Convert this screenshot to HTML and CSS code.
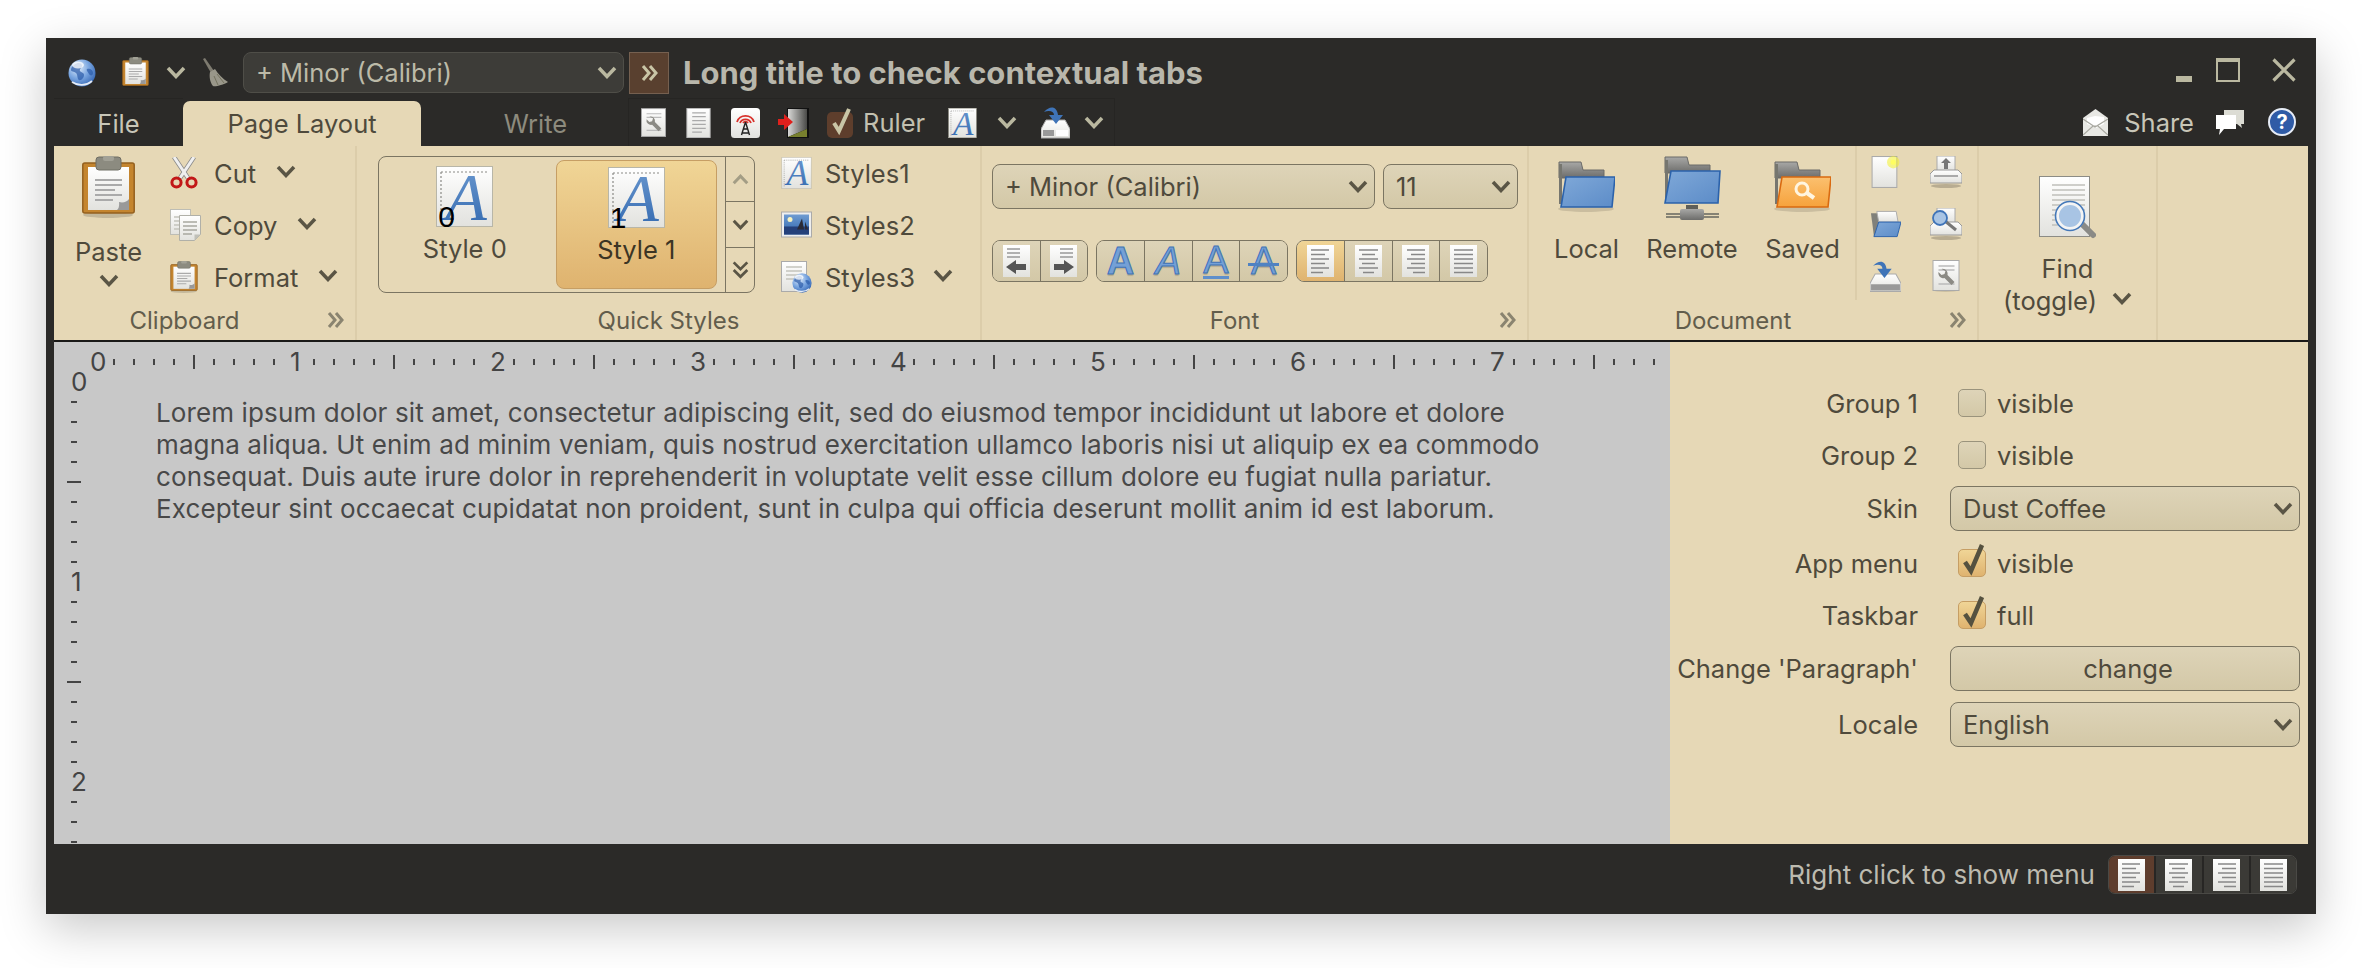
FILE: index.html
```html
<!DOCTYPE html>
<html>
<head lang="en">
    <meta charset="UTF-8">
    <title>Long title to check contextual tabs</title>
    <link rel="stylesheet" href="styles.css">
</head>
<body>
<svg class="defs" width="0" height="0">
    <defs>
        <linearGradient id="pg" x1="0" y1="0" x2="0" y2="1"><stop offset="0" stop-color="#fff"/><stop offset="1" stop-color="#e2e2de"/></linearGradient>
        <linearGradient id="blu" x1="0" y1="0" x2="0" y2="1"><stop offset="0" stop-color="#6f9cd2"/><stop offset="1" stop-color="#2f66ad"/></linearGradient>
        <linearGradient id="fold" x1="0" y1="0" x2="1" y2="1"><stop offset="0" stop-color="#7fa8d8"/><stop offset="1" stop-color="#5c8cc8"/></linearGradient>
        <linearGradient id="gry" x1="0" y1="0" x2="0" y2="1"><stop offset="0" stop-color="#a8a8a6"/><stop offset="1" stop-color="#6c6c6a"/></linearGradient>
        <linearGradient id="org" x1="0" y1="0" x2="0" y2="1"><stop offset="0" stop-color="#fbc06f"/><stop offset="1" stop-color="#f6a23c"/></linearGradient>
        <linearGradient id="door" x1="0" y1="0" x2="1" y2="0"><stop offset="0" stop-color="#d8d8d6"/><stop offset="1" stop-color="#4a4a48"/></linearGradient>
        <radialGradient id="glb" cx=".35" cy=".3" r=".8"><stop offset="0" stop-color="#e4eefa"/><stop offset=".5" stop-color="#7aa6e0"/><stop offset="1" stop-color="#2c5fb0"/></radialGradient>

        <symbol id="chev" viewBox="0 0 20 13"><path d="M2 2l8 8.5L18 2" fill="none" stroke="currentColor" stroke-width="3.5"/></symbol>
        <symbol id="more" viewBox="0 0 17 16"><path d="M2 1l6 7-6 7M9 1l6 7-6 7" fill="none" stroke="currentColor" stroke-width="3"/></symbol>

        <symbol id="globe" viewBox="0 0 28 28">
            <circle cx="14" cy="14" r="13.5" fill="url(#glb)"/>
            <path d="M6 6c4-3 7-2 8 0s-3 4-2 6 4 1 4 4-3 6-5 5-1-5-3-7-5-1-5-3 1-4 3-5zM19 10c3-1 6 1 6 4s-3 3-4 1-3-4-2-5z" fill="#2a5aa8" opacity=".7"/>
            <ellipse cx="10" cy="6" rx="6" ry="3.5" fill="#fff" opacity=".75"/>
            <path d="M4 23c6 4 14 4 20-1" fill="none" stroke="#fff" stroke-width="1.8" opacity=".85"/>
        </symbol>
        <symbol id="clip" viewBox="0 0 53 62">
            <ellipse cx="26" cy="59" rx="25" ry="3" fill="#000" opacity=".15"/>
            <rect x=".8" y="7" width="51.4" height="50" rx="2" fill="#c4852f" stroke="#94601f" stroke-width="1.5"/>
            <rect x="6" y="11" width="41" height="43" fill="url(#pg)"/>
            <path d="M13 24h27M13 29h27M13 34h20M13 39h27M13 44h18" stroke="#aaa" stroke-width="2"/>
            <path d="M47 54H35c3-2 2-8 2-8 4 1 8 0 10-3z" fill="#999"/>
            <rect x="14" y="1" width="25" height="13" rx="3" fill="#8c8b80" stroke="#6f6e64"/>
            <rect x="21" y="0" width="11" height="5" rx="2" fill="#a2a196"/>
        </symbol>
        <symbol id="broom" viewBox="0 0 26 29">
            <path d="M1 1l2-1 9 13-3 2z" fill="#7e7b70"/>
            <path d="M8 14l5-3c3 5 8 10 13 13-5 3-13 5-15 4-3-3-4-10-3-14z" fill="#99978a"/>
            <path d="M12 18l4 9M15 16l7 9" stroke="#74725f" stroke-width="1"/>
        </symbol>
        <symbol id="cut" viewBox="0 0 28 32">
            <path d="M4 0l14 21M24 0L10 21" stroke="#8c8c8c" stroke-width="4.6"/>
            <path d="M4 0l14 21M24 0L10 21" stroke="#efefef" stroke-width="3"/>
            <ellipse cx="6.5" cy="25.5" rx="4.6" ry="4.4" fill="none" stroke="#c21818" stroke-width="3"/>
            <ellipse cx="21.5" cy="25.5" rx="4.6" ry="4.4" fill="none" stroke="#c21818" stroke-width="3"/>
        </symbol>
        <symbol id="copy" viewBox="0 0 31 32">
            <rect x=".5" y=".5" width="20" height="25" fill="url(#pg)" stroke="#bdbdb5"/>
            <path d="M4 8h13M4 12h13M4 16h13M4 20h13" stroke="#c4c4bc" stroke-width="1.3"/>
            <path d="M9.5 6.5h21v19l-6 6h-15z" fill="url(#pg)" stroke="#b0b0a8"/>
            <path d="M13 13h14M13 17h14M13 21h14M13 25h9" stroke="#a8a8a0" stroke-width="1.3"/>
            <path d="M24.5 31.5v-6h6z" fill="#c0c0b8"/>
        </symbol>
        <symbol id="apage" viewBox="0 0 57 61">
            <rect x=".5" y=".5" width="56" height="60" fill="url(#pg)" stroke="#b8b6a8"/>
            <path d="M5 6h48M5 6v50" stroke="#8a8a86" stroke-width="1.2" stroke-dasharray="2 2"/>
            <text class="apage-a" x="30" y="54" fill="url(#blu)">A</text>
        </symbol>
        <symbol id="image" viewBox="0 0 31 27">
            <rect x=".5" y=".5" width="30" height="25" fill="#eee" stroke="#aaa"/>
            <rect x="3" y="3" width="25" height="20" fill="url(#blu)"/>
            <rect x="3" y="15" width="25" height="8" fill="#24407a"/>
            <circle cx="9" cy="8" r="2.5" fill="#f6f2c0"/>
            <path d="M21 7l2 11h-7zM24 10l3 8h-3z" fill="#2b2b35"/>
        </symbol>
        <symbol id="docglobe" viewBox="0 0 31 32">
            <rect x=".5" y=".5" width="25" height="30" fill="url(#pg)" stroke="#aaa"/>
            <path d="M5 6h16M5 10h16M5 14h16M5 18h8" stroke="#c4c4bc" stroke-width="1.3"/>
            <use href="#globe" x="11" y="12" width="20" height="20"/>
        </symbol>
        <symbol id="docwrench" viewBox="0 0 27 32">
            <ellipse cx="13" cy="30.5" rx="12" ry="1.5" fill="#000" opacity=".12"/>
            <rect x=".5" y=".5" width="26" height="30" fill="url(#pg)" stroke="#aaa"/>
            <path d="M6 6h16M6 10h16M6 24h16" stroke="#bbb" stroke-width="1.3"/>
            <path d="M9 9a5 5 0 0 1 6 6l7 7-3 3-7-7a5 5 0 0 1-6-6l3 3 3-1 1-3z" fill="#8b8a84"/>
        </symbol>
        <symbol id="doc" viewBox="0 0 25 31">
            <rect x=".5" y=".5" width="24" height="30" fill="url(#pg)" stroke="#bbb"/>
            <path d="M6 5h14M6 9h14M6 13h14M6 17h14M6 21h14M6 25h10" stroke="#aaa" stroke-width="1.3"/>
        </symbol>
        <symbol id="antenna" viewBox="0 0 29 30">
            <rect width="29" height="30" rx="3.5" fill="url(#pg)"/>
            <path d="M6 14a9 9 0 0 1 17 0M9 15a6 6 0 0 1 11 0M12 15a3 3 0 0 1 5 0" fill="none" stroke="#d8322c" stroke-width="1.8"/>
            <path d="M14.5 14l-4 13M14.5 14l4 13M12.5 21h4M11 25h7" stroke="#222" stroke-width="1.4" fill="none"/>
        </symbol>
        <symbol id="exit" viewBox="0 0 31 30">
            <path d="M9 0h22v30H9z" fill="#111"/>
            <path d="M10 1h19v20L10 29z" fill="url(#door)"/>
            <path d="M29 21v8H10z" fill="#78802e"/>
            <path d="M0 11h6V6l9 8-9 8v-5H0z" fill="#e0201c"/>
        </symbol>
        <symbol id="save" viewBox="0 0 29 33">
            <path d="M5 14h19l5 9v9H0v-9z" fill="url(#pg)" stroke="#aaa"/>
            <rect x="2" y="24" width="11" height="6" fill="#999"/>
            <rect x="15" y="24" width="12" height="6" fill="#fff"/>
            <path d="M3 6c6-7 13-6 14 3h5l-7 9-7-9h5c0-4-5-5-10-3z" fill="#3f74b8"/>
        </symbol>
        <symbol id="local" viewBox="0 0 57 52">
            <ellipse cx="28" cy="49" rx="28" ry="3" fill="#000" opacity=".12"/>
            <path d="M1 2h22l2 8h21v8H1z" fill="url(#gry)" stroke="#6a6a68"/>
            <path d="M1 4v40h3V4z" fill="#76766f"/>
            <path d="M8 17h49l-3 30H3z" fill="url(#fold)" stroke="#2b62ab" stroke-width="1.6"/>
        </symbol>
        <symbol id="remote" viewBox="0 0 57 64">
            <path d="M1 1h22l2 8h21v8H1z" fill="url(#gry)" stroke="#6a6a68"/>
            <path d="M1 4v40h3V4z" fill="#76766f"/>
            <path d="M7 15h49l-2 32H1z" fill="url(#fold)" stroke="#2b62ab" stroke-width="1.6"/>
            <path d="M2 58h53M2 61h53" stroke="#66665f" stroke-width="1.5"/>
            <rect x="22" y="49" width="12" height="4" fill="#5f5f59"/>
            <rect x="16" y="53" width="24" height="11" rx="2" fill="url(#gry)"/>
        </symbol>
        <symbol id="saved" viewBox="0 0 57 52">
            <ellipse cx="28" cy="49" rx="28" ry="3" fill="#000" opacity=".12"/>
            <path d="M1 2h22l2 8h21v8H1z" fill="url(#gry)" stroke="#6a6a68"/>
            <path d="M1 4v40h3V4z" fill="#76766f"/>
            <path d="M8 17h49l-3 30H3z" fill="url(#org)" stroke="#d96a10" stroke-width="1.6"/>
            <circle cx="28" cy="29" r="6" fill="none" stroke="#fff5e0" stroke-width="3"/>
            <path d="M33 33l7 5" stroke="#fff5e0" stroke-width="4"/>
        </symbol>
        <symbol id="newdoc" viewBox="0 0 27 31">
            <rect x=".5" y=".5" width="24" height="30" fill="url(#pg)" stroke="#aaa"/>
            <circle cx="21" cy="6" r="6" fill="#f3f02a" opacity=".55"/>
            <circle cx="21" cy="6" r="2.5" fill="#fffe60"/>
        </symbol>
        <symbol id="print" viewBox="0 0 32 32">
            <ellipse cx="16" cy="30" rx="15" ry="2" fill="#000" opacity=".2"/>
            <rect x="7" y="0" width="18" height="15" fill="url(#pg)" stroke="#aaa"/>
            <path d="M16 2l5 5h-3v6h-4V7h-3z" fill="#777"/>
            <path d="M4 14h24l4 4v9H0v-9z" fill="url(#pg)" stroke="#999"/>
            <rect x="4" y="19" width="24" height="2" fill="#aaa"/>
        </symbol>
        <symbol id="open" viewBox="0 0 32 30">
            <path d="M1 4h8l2 3v20H4z" fill="#80807a"/>
            <path d="M7 2h20l2 11H9z" fill="url(#pg)" stroke="#aaa"/>
            <path d="M9 13h23l-4 15H4z" fill="url(#fold)" stroke="#2b62ab"/>
        </symbol>
        <symbol id="preview" viewBox="0 0 32 32">
            <ellipse cx="16" cy="30" rx="15" ry="2" fill="#000" opacity=".2"/>
            <rect x="7" y="0" width="18" height="15" fill="url(#pg)" stroke="#aaa"/>
            <path d="M4 14h24l4 4v9H0v-9z" fill="url(#pg)" stroke="#999"/>
            <path d="M15 13l11 9" stroke="#777" stroke-width="3"/>
            <circle cx="10" cy="10" r="7" fill="#a8c4e4" stroke="#3f74b8" stroke-width="1.8"/>
        </symbol>
        <symbol id="disk" viewBox="0 0 30 30">
            <path d="M5 13h20l5 9v8H0v-8z" fill="url(#pg)" stroke="#aaa"/>
            <rect x="1" y="23" width="28" height="6" fill="#999"/>
            <path d="M3 5c6-6 12-5 13 3h5l-7 9-7-9h5c0-4-4-5-9-3z" fill="#3f74b8"/>
        </symbol>
        <symbol id="find" viewBox="0 0 57 63">
            <rect x=".5" y=".5" width="50" height="60" fill="url(#pg)" stroke="#8c8c86"/>
            <path d="M13 9h33M13 14h33M13 19h33M13 24h33M13 29h33M13 34h33M13 39h33M13 44h33M13 49h33" stroke="#c0c0ba" stroke-width="1.5"/>
            <path d="M42 47l12 12" stroke="#8a8a86" stroke-width="6" stroke-linecap="round"/>
            <circle cx="31" cy="40" r="13" fill="#a8c4e4" stroke="#f4f4f4" stroke-width="4"/>
            <circle cx="31" cy="40" r="14.5" fill="none" stroke="#4478b8" stroke-width="1.6"/>
        </symbol>
        <symbol id="chat" viewBox="0 0 28 27">
            <path d="M8 1h20v14h-3l1 4-5-4H8z" fill="#dcdcd4"/>
            <path d="M0 6h20v14H8l-5 6 1-6H0z" fill="#fff"/>
        </symbol>
        <symbol id="mail" viewBox="0 0 25 27">
            <path d="M12.5 0L25 9v18H0V9z" fill="#e8e8e4"/>
            <path d="M4 9l8-2 9 1v7l-8 4-9-4z" fill="#fff"/>
            <path d="M0 26l10-9h5l10 9M0 10l12 8 13-8" fill="none" stroke="#a8a8a0" stroke-width="1.2"/>
        </symbol>
        <symbol id="help" viewBox="0 0 28 29">
            <circle cx="14" cy="14" r="13" fill="#2f5ba6" stroke="#e6ecf6" stroke-width="2"/>
        </symbol>
        <symbol id="ind-l" viewBox="0 0 27 32">
            <rect width="27" height="32" fill="url(#pg)"/>
            <path d="M4 4h13M4 8h13M4 12h13" stroke="#999" stroke-width="1.5"/>
            <path d="M3 22l10-7v4h10v6H13v4z" fill="#555"/>
        </symbol>
        <symbol id="ind-r" viewBox="0 0 27 32">
            <rect width="27" height="32" fill="url(#pg)"/>
            <path d="M10 4h13M10 8h13M10 12h13" stroke="#999" stroke-width="1.5"/>
            <path d="M24 22l-10-7v4H4v6h10v4z" fill="#555"/>
        </symbol>
        <symbol id="al-l" viewBox="0 0 27 32">
            <rect width="27" height="32" fill="url(#pg)"/>
            <path d="M4 5h18M4 9.500h14M4 14h18M4 18.500h14M4 23h18M4 27.500h12" stroke="#888" stroke-width="1.6"/>
        </symbol>
        <symbol id="al-c" viewBox="0 0 27 32">
            <rect width="27" height="32" fill="url(#pg)"/>
            <path d="M4 5h19M7 9.500h13M4 14h19M7 18.500h13M4 23h19M8 27.500h11" stroke="#888" stroke-width="1.6"/>
        </symbol>
        <symbol id="al-r" viewBox="0 0 27 32">
            <rect width="27" height="32" fill="url(#pg)"/>
            <path d="M5 5h18M9 9.500h14M5 14h18M9 18.500h14M5 23h18M11 27.500h12" stroke="#888" stroke-width="1.6"/>
        </symbol>
        <symbol id="al-j" viewBox="0 0 27 32">
            <rect width="27" height="32" fill="url(#pg)"/>
            <path d="M4 5h19M4 9.500h19M4 14h19M4 18.500h19M4 23h19M4 27.500h19" stroke="#888" stroke-width="1.6"/>
        </symbol>
    </defs>
</svg>

<div class="window">
    <div class="titlebar">
        <svg class="ic-globe"><use href="#globe"/></svg>
        <svg class="ic-tb-clip"><use href="#clip"/></svg>
        <svg class="chev tb-chev"><use href="#chev"/></svg>
        <svg class="ic-broom"><use href="#broom"/></svg>
        <div class="combo combo-dark">
            <span>+ Minor (Calibri)</span>
            <svg class="chev"><use href="#chev"/></svg>
        </div>
        <div class="more-btn"><svg class="more"><use href="#more"/></svg></div>
        <div class="title">Long title to check contextual tabs</div>
        <div class="win-ctrls">
            <span class="win-min"></span>
            <span class="win-max"></span>
            <svg class="win-close" viewBox="0 0 24 24"><path d="M1.500 1.500l21 21M22.500 1.500l-21 21" stroke="#bab8a0" stroke-width="3.2"/></svg>
        </div>
    </div>

    <div class="tabrow">
        <div class="tab tab-file">File</div>
        <div class="tab tab-active">Page Layout</div>
        <div class="tab tab-write">Write</div>
        <div class="qat">
            <svg class="ic-qat"><use href="#docwrench"/></svg>
            <svg class="ic-qat"><use href="#doc"/></svg>
            <svg class="ic-qat ic-wide"><use href="#antenna"/></svg>
            <svg class="ic-qat ic-wider"><use href="#exit"/></svg>
            <span class="qat-check"><svg viewBox="0 0 26 30"><rect y="4" width="26" height="26" rx="5" fill="#5e3e2c"/><path d="M7 15l5 8L22 1" fill="none" stroke="#c9c5a6" stroke-width="4"/></svg></span>
            <span class="qat-label">Ruler</span>
            <svg class="ic-qat ic-wide ic-apage"><use href="#apage"/></svg>
            <svg class="chev qat-chev"><use href="#chev"/></svg>
            <svg class="ic-qat ic-wide ic-save"><use href="#save"/></svg>
            <svg class="chev qat-chev qat-chev-last"><use href="#chev"/></svg>
        </div>
        <div class="share">
            <svg class="ic-mail"><use href="#mail"/></svg>
            <span class="share-label">Share</span>
            <svg class="ic-chat"><use href="#chat"/></svg>
            <span class="help"><svg class="ic-help"><use href="#help"/></svg><b>?</b></span>
        </div>
    </div>

    <div class="ribbon">
        <section class="group group-clip">
            <div class="group-body">
                <div class="paste">
                    <svg class="ic-paste"><use href="#clip"/></svg>
                    <span>Paste</span>
                    <svg class="chev"><use href="#chev"/></svg>
                </div>
                <div class="stack">
                    <div class="row"><span class="row-ic"><svg class="ic-28"><use href="#cut"/></svg></span><span>Cut</span><svg class="chev"><use href="#chev"/></svg></div>
                    <div class="row"><span class="row-ic"><svg class="ic-31"><use href="#copy"/></svg></span><span>Copy</span><svg class="chev"><use href="#chev"/></svg></div>
                    <div class="row"><span class="row-ic"><svg class="ic-28"><use href="#clip"/></svg></span><span>Format</span><svg class="chev"><use href="#chev"/></svg></div>
                </div>
            </div>
            <div class="group-foot"><span>Clipboard</span><svg class="more"><use href="#more"/></svg></div>
        </section>

        <section class="group group-quick">
            <div class="group-body">
                <div class="gallery">
                    <div class="style-cell">
                        <div class="style-ic"><svg class="ic-style"><use href="#apage"/></svg><i>0</i></div>
                        <span>Style 0</span>
                    </div>
                    <div class="style-cell style-on">
                        <div class="style-ic"><svg class="ic-style"><use href="#apage"/></svg><i>1</i></div>
                        <span>Style 1</span>
                    </div>
                    <div class="scroller">
                        <div class="dim"><svg class="chev chev-up"><use href="#chev"/></svg></div>
                        <div><svg class="chev"><use href="#chev"/></svg></div>
                        <div><svg class="dbl" viewBox="0 0 20 22"><path d="M2 2l8 8 8-8M2 11l8 8 8-8" fill="none" stroke="currentColor" stroke-width="3.2"/></svg></div>
                    </div>
                </div>
                <div class="stack stack-styles">
                    <div class="row"><span class="row-ic"><svg class="ic-31"><use href="#apage"/></svg></span><span>Styles1</span></div>
                    <div class="row"><span class="row-ic"><svg class="ic-31"><use href="#image"/></svg></span><span>Styles2</span></div>
                    <div class="row"><span class="row-ic"><svg class="ic-31"><use href="#docglobe"/></svg></span><span>Styles3</span><svg class="chev"><use href="#chev"/></svg></div>
                </div>
            </div>
            <div class="group-foot group-foot-plain"><span>Quick Styles</span></div>
        </section>

        <section class="group group-font">
            <div class="group-body">
                <div class="font-rows">
                    <div class="font-row">
                        <div class="combo combo-font"><span>+ Minor (Calibri)</span><svg class="chev"><use href="#chev"/></svg></div>
                        <div class="combo combo-size"><span>11</span><svg class="chev"><use href="#chev"/></svg></div>
                    </div>
                    <div class="font-row font-row-btns">
                        <div class="btns btns-2">
                            <div><svg class="ic-al"><use href="#ind-l"/></svg></div>
                            <div><svg class="ic-al"><use href="#ind-r"/></svg></div>
                        </div>
                        <div class="btns btns-4">
                            <div><span class="fa fa-b">A</span></div>
                            <div><span class="fa fa-i">A</span></div>
                            <div><span class="fa fa-u">A</span></div>
                            <div><span class="fa fa-s">A</span></div>
                        </div>
                        <div class="btns btns-4">
                            <div class="btn-on"><svg class="ic-al"><use href="#al-l"/></svg></div>
                            <div><svg class="ic-al"><use href="#al-c"/></svg></div>
                            <div><svg class="ic-al"><use href="#al-r"/></svg></div>
                            <div><svg class="ic-al"><use href="#al-j"/></svg></div>
                        </div>
                    </div>
                </div>
            </div>
            <div class="group-foot"><span>Font</span><svg class="more"><use href="#more"/></svg></div>
        </section>

        <section class="group group-doc">
            <div class="group-body">
                <div class="doc-large">
                    <div class="large large-local"><div class="large-ic"><svg class="ic-folder"><use href="#local"/></svg></div><span>Local</span></div>
                    <div class="large large-remote"><div class="large-ic"><svg class="ic-remote"><use href="#remote"/></svg></div><span>Remote</span></div>
                    <div class="large large-saved"><div class="large-ic"><svg class="ic-folder"><use href="#saved"/></svg></div><span>Saved</span></div>
                </div>
                <div class="doc-small">
                    <svg class="ic-31"><use href="#newdoc"/></svg>
                    <svg class="ic-32"><use href="#print"/></svg>
                    <svg class="ic-31"><use href="#open"/></svg>
                    <svg class="ic-32"><use href="#preview"/></svg>
                    <svg class="ic-31"><use href="#disk"/></svg>
                    <svg class="ic-32"><use href="#docwrench"/></svg>
                </div>
            </div>
            <div class="group-foot"><span>Document</span><svg class="more"><use href="#more"/></svg></div>
        </section>

        <section class="group group-find">
            <svg class="ic-find"><use href="#find"/></svg>
            <span class="find-line">Find</span>
            <span class="find-line find-toggle">(toggle)<svg class="chev"><use href="#chev"/></svg></span>
        </section>
    </div>

    <div class="main">
        <div class="doc">
            <div class="hruler">
                <span>0</span><span>1</span><span>2</span><span>3</span><span>4</span><span>5</span><span>6</span><span>7</span>
            </div>
            <div class="doc-body">
                <div class="vruler">
                    <span>0</span><span>1</span><span>2</span>
                </div>
                <p class="lorem">Lorem ipsum dolor sit amet, consectetur adipiscing elit, sed do eiusmod tempor incididunt ut labore et dolore<br>magna aliqua. Ut enim ad minim veniam, quis nostrud exercitation ullamco laboris nisi ut aliquip ex ea commodo<br>consequat. Duis aute irure dolor in reprehenderit in voluptate velit esse cillum dolore eu fugiat nulla pariatur.<br>Excepteur sint occaecat cupidatat non proident, sunt in culpa qui officia deserunt mollit anim id est laborum.</p>
            </div>
        </div>
        <div class="side">
            <label>Group 1</label>
            <div class="check"><span class="box"></span>visible</div>
            <label>Group 2</label>
            <div class="check"><span class="box"></span>visible</div>
            <label>Skin</label>
            <div class="combo combo-side"><span>Dust Coffee</span><svg class="chev"><use href="#chev"/></svg></div>
            <label>App menu</label>
            <div class="check"><span class="box box-on"><svg viewBox="0 0 28 34"><path d="M7 19l6 9L24 2" fill="none" stroke="#55513f" stroke-width="4.5"/></svg></span>visible</div>
            <label>Taskbar</label>
            <div class="check"><span class="box box-on"><svg viewBox="0 0 28 34"><path d="M7 19l6 9L24 2" fill="none" stroke="#55513f" stroke-width="4.5"/></svg></span>full</div>
            <label>Change 'Paragraph'</label>
            <div class="combo combo-side combo-btn"><span>change</span></div>
            <label>Locale</label>
            <div class="combo combo-side"><span>English</span><svg class="chev"><use href="#chev"/></svg></div>
        </div>
    </div>

    <div class="status">
        <span class="status-text">Right click to show menu</span>
        <div class="status-btns">
            <div class="status-on"><svg class="ic-al"><use href="#al-l"/></svg></div>
            <div><svg class="ic-al"><use href="#al-c"/></svg></div>
            <div><svg class="ic-al"><use href="#al-r"/></svg></div>
            <div><svg class="ic-al"><use href="#al-j"/></svg></div>
        </div>
    </div>
</div>
</body>
</html>
```

FILE: styles.css
```css
* {
    padding: 0;
    margin: 0;
    box-sizing: border-box;
}

body {
    background: #fff;
    padding: 38px 46px 0;
    height: 968px;
    overflow: hidden;
    font-family: "Inter", sans-serif;
    font-size: 25.5px;
    color: #4f4a3c;
}

.defs {
    position: absolute;
}

svg {
    display: block;
    flex: none;
}

.window {
    width: 2270px;
    height: 876px;
    padding: 0 8px;
    background: #2b2a28;
    box-shadow: 0 14px 44px rgba(0, 0, 0, .22);
    display: flex;
    flex-direction: column;
}

.chev {
    width: 20px;
    height: 13px;
    color: #5a5545;
}

.more {
    width: 17px;
    height: 16px;
    color: #8a8470;
}

/* title bar */
.titlebar {
    height: 60px;
    padding: 9px 12px 0 14px;
    display: flex;
    align-items: center;
    flex: none;
}

.ic-globe { width: 28px; height: 28px; }
.ic-tb-clip { width: 27px; height: 31px; margin-left: 26px; }
.tb-chev { margin-left: 17px; color: #bab8a0; }
.ic-broom { width: 26px; height: 29px; margin-left: 16px; }

.combo {
    display: flex;
    align-items: center;
    justify-content: space-between;
    border: 1.5px solid #7b7562;
    border-radius: 8px;
    padding: 0 6px 0 12px;
    background: linear-gradient(#ded4b8, #d3c8a7);
}

.combo-dark {
    width: 381px;
    height: 41px;
    margin-left: 15px;
    background: #3d3c38;
    border-color: #4f4e48;
    color: #bcbaa8;
}

.combo-dark .chev { color: #bab8a0; }

.more-btn {
    width: 40px;
    height: 42px;
    margin-left: 5px;
    background: #59402f;
    border: 1px solid #756050;
    display: flex;
    align-items: center;
    justify-content: center;
}

.more-btn .more { color: #c9c5a6; }

.title {
    margin-left: 14px;
    font-size: 31px;
    font-weight: 700;
    color: #b9b7ac;
    flex: 1;
}

.win-ctrls {
    display: flex;
    align-items: flex-end;
    margin-top: -5px;
}

.win-min { width: 16px; height: 6px; background: #bab8a0; }
.win-max { width: 24px; height: 24px; margin-left: 24px; border: 2.5px solid #bab8a0; border-top-width: 4px; }
.win-close { width: 24px; height: 24px; margin-left: 32px; }

/* tabs */
.tabrow {
    height: 48px;
    display: flex;
    align-items: flex-end;
    flex: none;
}

.tab {
    height: 45px;
    line-height: 45px;
    text-align: center;
}

.tab-file {
    width: 129px;
    color: #c8c6b8;
    height: 48px;
    line-height: 50px;
    border-top: 1px solid #262523;
}

.tab-active {
    width: 238px;
    background: #e6d8b6;
    border-radius: 7px 7px 0 0;
}

.tab-write {
    width: 207px;
    padding-left: 22px;
    color: #8d8b7e;
}

.qat {
    width: 487px;
    height: 48px;
    border: 1px solid #262523;
    border-bottom: 0;
    padding-left: 12px;
    display: flex;
    align-items: center;
    gap: 20px;
}

.ic-qat { width: 25px; height: 30px; }
.ic-wide { width: 29px; }
.ic-wider { width: 31px; margin-left: -2px; }
.qat-check { width: 26px; height: 30px; margin-left: -2px; }
.qat-label { color: #c2c0b0; margin-left: -10px; }
.ic-apage { margin-left: 3px; }
.qat-chev { color: #bab8a0; }
.ic-save { height: 33px; margin-left: 4px; }
.qat-chev-last { margin-left: -6px; }

.share {
    flex: 1;
    height: 48px;
    padding-right: 12px;
    display: flex;
    align-items: center;
    justify-content: flex-end;
}

.ic-mail { width: 25px; height: 27px; }
.share-label { margin-left: 16px; color: #c8c6b8; }
.ic-chat { width: 28px; height: 27px; margin-left: 22px; }

.help {
    position: relative;
    width: 28px;
    height: 29px;
    margin-left: 24px;
}

.ic-help { width: 28px; height: 29px; }

.help b {
    position: absolute;
    left: 0;
    right: 0;
    top: 0;
    text-align: center;
    color: #fff;
    font-size: 20px;
    line-height: 28px;
}

/* ribbon */
.ribbon {
    height: 196px;
    background: #e6d8b6;
    border-bottom: 2px solid #1a1917;
    display: flex;
    flex: none;
}

.group {
    height: 194px;
    border-right: 2px solid #dccdaa;
    display: flex;
    flex-direction: column;
}

.group-clip { width: 303px; }
.group-quick { width: 625px; }
.group-font { width: 547px; }
.group-doc { width: 450px; }
.group-find { width: 179px; }

.group-body {
    height: 154px;
    display: flex;
}

.group-foot {
    height: 40px;
    display: flex;
    align-items: center;
    color: #625d4c;
    font-size: 24px;
}

.group-foot span {
    flex: 1;
    text-align: center;
}

.group-foot .more {
    margin: 0 11px 0 12px;
}

.paste {
    width: 67px;
    margin-left: 21px;
    padding-top: 10px;
    display: flex;
    flex-direction: column;
    align-items: center;
}

.ic-paste { width: 53px; height: 62px; }
.paste span { line-height: 30px; margin-top: 19px; }
.paste .chev { margin-top: 7px; }

.stack {
    padding-top: 1px;
    margin-left: 28px;
    display: grid;
    grid-auto-rows: 52px;
}

.row {
    display: flex;
    align-items: center;
}

.row-ic {
    width: 44px;
}

.row .chev { margin-left: 20px; margin-top: -4px; }

.ic-28 { width: 28px; height: 32px; }
.ic-31 { width: 31px; height: 32px; }
.ic-32 { width: 32px; height: 32px; }

.apage-a {
    font-family: "Liberation Serif", serif;
    font-style: italic;
    font-size: 68px;
    text-anchor: middle;
}

/* quick styles */
.gallery {
    width: 377px;
    height: 137px;
    margin: 10px 0 0 21px;
    border: 1.5px solid #7b7562;
    border-radius: 8px;
    padding-left: 5px;
    display: flex;
}

.style-cell {
    width: 162px;
    height: 129px;
    margin-top: 3px;
    padding-top: 6px;
    border-radius: 8px;
    display: flex;
    flex-direction: column;
    align-items: center;
}

.style-cell span { line-height: 28px; margin-top: 8px; }

.style-on {
    margin-left: 10px;
    background: linear-gradient(#f0d596, #dfb36f);
    border: 1px solid #c69e64;
    color: #3c3524;
}

.style-ic { position: relative; }
.ic-style { width: 57px; height: 61px; }

.style-ic i {
    position: absolute;
    left: 2px;
    bottom: -1px;
    font-family: "Liberation Sans", sans-serif;
    font-style: normal;
    font-size: 30px;
    line-height: 22px;
    color: #000;
}

.scroller {
    width: 29px;
    margin-left: 8px;
    border-left: 1.5px solid #7b7562;
    display: flex;
    flex-direction: column;
}

.scroller div {
    flex: 1;
    display: flex;
    align-items: center;
    justify-content: center;
    border-bottom: 1.5px solid #7b7562;
    color: #5a5545;
}

.scroller div:last-child { border-bottom: 0; }
.scroller .chev { width: 17px; height: 11px; }
.scroller .dim .chev { color: #a39d85; transform: rotate(180deg); }
.dbl { width: 17px; height: 20px; }

.stack-styles { margin-left: 26px; }
.stack-styles .chev { margin-left: 18px; }

/* font */
.font-rows {
    margin: 18px 0 0 10px;
}

.font-row {
    display: flex;
    gap: 8px;
}

.font-row-btns { margin-top: 31px; }

.combo-font { width: 383px; height: 45px; }
.combo-size { width: 135px; height: 45px; }

.btns {
    height: 42px;
    border: 1.5px solid #7b7562;
    border-radius: 8px;
    overflow: hidden;
    display: flex;
}

.btns-2 { width: 96px; }
.btns-4 { width: 192px; }

.btns div {
    flex: 1;
    display: flex;
    align-items: center;
    justify-content: center;
    border-right: 1.5px solid #7b7562;
    background: linear-gradient(#ded4b8, #d3c8a7);
}

.btns div:last-child { border-right: 0; }
.btns .btn-on { background: linear-gradient(#f0d596, #dfb36f); }

.ic-al { width: 27px; height: 32px; }

.fa {
    position: relative;
    font-family: "Liberation Sans", sans-serif;
    font-size: 38px;
    line-height: 38px;
    color: #74a0d6;
    -webkit-text-stroke: 1px #3f72b5;
    text-shadow: 0 2px 1px rgba(0, 0, 0, .15);
}

.fa-b { font-weight: 700; }
.fa-i { font-style: italic; }
.fa-u { border-bottom: 3px solid #5f8fcb; line-height: 32px; }

.fa-s::after {
    content: "";
    position: absolute;
    left: -3px;
    right: -3px;
    top: 21px;
    height: 3px;
    background: #4f82c2;
}

/* document */
.doc-large {
    width: 328px;
    padding-left: 10px;
    border-right: 2px solid #dccdaa;
    display: flex;
}

.large {
    padding-top: 10px;
    display: flex;
    flex-direction: column;
    align-items: center;
}

.large span { line-height: 28px; }
.large-local { width: 95px; }
.large-remote { width: 116px; }
.large-saved { width: 105px; }
.large-ic { height: 79px; }
.ic-folder { width: 57px; height: 52px; margin-top: 4px; }
.ic-remote { width: 57px; height: 64px; }

.doc-small {
    display: grid;
    grid-template-columns: 56px 66px;
    grid-auto-rows: 52px;
    align-items: center;
    justify-items: center;
}

/* find */
.group-find {
    padding-top: 30px;
    align-items: center;
}

.ic-find { width: 57px; height: 63px; }
.find-line { line-height: 32px; }
.group-find .ic-find + .find-line { margin-top: 14px; }

.find-toggle {
    display: flex;
    align-items: center;
    gap: 15px;
}

.find-toggle .chev { margin-top: -6px; }

/* main */
.main {
    height: 502px;
    display: flex;
    flex: none;
}

.doc {
    width: 1616px;
    padding-top: 13px;
    background: #c8c8c8;
    overflow: hidden;
}

.hruler {
    width: 1567px;
    height: 14px;
    margin-left: 36px;
    display: flex;
    background-image:
        linear-gradient(90deg, #c8c8c8 0 18px, transparent 18px),
        linear-gradient(90deg, #444 0 2px, transparent 2px),
        linear-gradient(90deg, #444 0 2px, transparent 2px);
    background-size: 200px 14px, 100px 14px, 20px 6px;
    background-position: 0 0, 103px 0, 23px 4px;
    background-repeat: repeat-x;
}

.hruler span {
    width: 200px;
    font-size: 26px;
    line-height: 14px;
    color: #444;
    flex: none;
}

.doc-body {
    margin-top: 1px;
    display: flex;
}

.vruler {
    width: 24px;
    height: 474px;
    margin-left: 13px;
    flex: none;
    background-image:
        linear-gradient(#c8c8c8 0 24px, transparent 24px),
        linear-gradient(#444 0 2px, transparent 2px),
        linear-gradient(#444 0 2px, transparent 2px);
    background-size: 24px 200px, 14px 100px, 6px 20px;
    background-position: 0 0, 0 11px, 4px 11px;
    background-repeat: repeat-y;
}

.vruler span {
    display: block;
    height: 200px;
    padding-left: 4px;
    font-size: 26px;
    line-height: 24px;
    color: #444;
}

.vruler span:last-child { height: 74px; }

.lorem {
    margin: 27px 0 0 65px;
    font-size: 26px;
    letter-spacing: .12px;
    line-height: 32px;
    color: #484848;
    white-space: nowrap;
}

/* side panel */
.side {
    flex: 1;
    padding-top: 35px;
    display: grid;
    grid-template-columns: 248px 350px;
    grid-template-rows: 52px 52px 55px 54px 50px 57px 55px;
    column-gap: 32px;
    align-items: center;
    background: #e6d8b6;
}

.side label { text-align: right; }

.check {
    padding-left: 8px;
    display: flex;
    align-items: center;
    gap: 11px;
}

.box {
    position: relative;
    width: 28px;
    height: 28px;
    border: 1.5px solid #9a937c;
    border-radius: 5px;
    background: linear-gradient(#ded4b8, #d3c8a7);
}

.box-on {
    background: linear-gradient(#f0d596, #dfb36f);
    border-color: #c69e64;
}

.box svg {
    position: absolute;
    left: -1px;
    top: -7px;
    width: 28px;
    height: 34px;
}

.combo-side { height: 45px; }
.combo-btn { justify-content: center; }

/* status */
.status {
    flex: 1;
    padding: 0 11px 9px 0;
    display: flex;
    align-items: center;
    justify-content: flex-end;
    gap: 13px;
}

.status-text { color: #bdbbb0; font-size: 26px; }

.status-btns {
    width: 189px;
    height: 39px;
    border-radius: 7px;
    overflow: hidden;
    border: 1px solid #4a4945;
    display: flex;
}

.status-btns div {
    flex: 1;
    background: #3b3a36;
    border-right: 2px solid #272624;
    display: flex;
    align-items: center;
    justify-content: center;
}

.status-btns div:last-child { border-right: 0; }
.status-btns .status-on { background: #5e3d2d; }
```
